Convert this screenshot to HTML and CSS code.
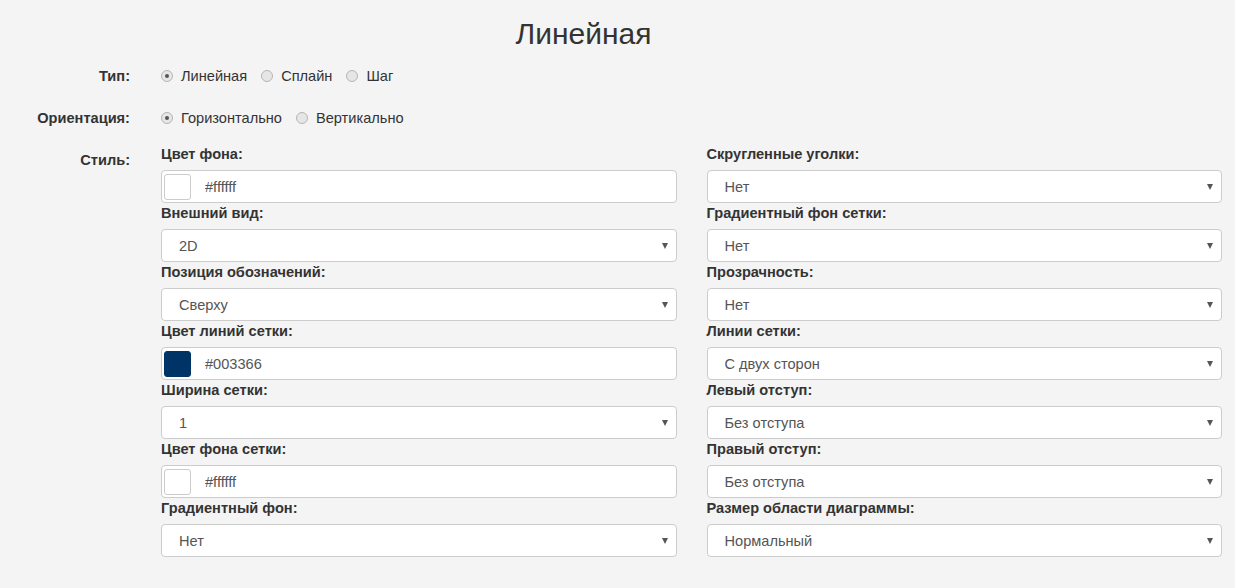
FILE: index.html
```html
<!DOCTYPE html>
<html lang="ru">
<head>
    <meta charset="UTF-8">
    <title>Линейная</title>
    <link rel="stylesheet" href="styles.css">
</head>
<body>
    <h1 class="title">Линейная</h1>

    <form class="settings">
        <div class="row">
            <label class="row-label">Тип:</label>
            <div class="radios">
                <label class="radio"><input type="radio" name="type" checked> Линейная</label>
                <label class="radio"><input type="radio" name="type"> Сплайн</label>
                <label class="radio"><input type="radio" name="type"> Шаг</label>
            </div>
        </div>

        <div class="row">
            <label class="row-label">Ориентация:</label>
            <div class="radios">
                <label class="radio"><input type="radio" name="orient" checked> Горизонтально</label>
                <label class="radio"><input type="radio" name="orient"> Вертикально</label>
            </div>
        </div>

        <div class="row">
            <label class="row-label">Стиль:</label>
            <div class="columns">
                <div class="column">
                    <div class="field">
                        <label>Цвет фона:</label>
                        <div class="color-input">
                            <span class="swatch"></span>
                            <input type="text" value="#ffffff">
                        </div>
                    </div>
                    <div class="field">
                        <label>Внешний вид:</label>
                        <div class="select"><select><option>2D</option><option>3D</option></select></div>
                    </div>
                    <div class="field">
                        <label>Позиция обозначений:</label>
                        <div class="select"><select><option>Сверху</option><option>Снизу</option></select></div>
                    </div>
                    <div class="field">
                        <label>Цвет линий сетки:</label>
                        <div class="color-input">
                            <span class="swatch swatch-blue"></span>
                            <input type="text" value="#003366">
                        </div>
                    </div>
                    <div class="field">
                        <label>Ширина сетки:</label>
                        <div class="select"><select><option>1</option><option>2</option></select></div>
                    </div>
                    <div class="field">
                        <label>Цвет фона сетки:</label>
                        <div class="color-input">
                            <span class="swatch"></span>
                            <input type="text" value="#ffffff">
                        </div>
                    </div>
                    <div class="field">
                        <label>Градиентный фон:</label>
                        <div class="select"><select><option>Нет</option><option>Да</option></select></div>
                    </div>
                </div>

                <div class="column">
                    <div class="field">
                        <label>Скругленные уголки:</label>
                        <div class="select"><select><option>Нет</option><option>Да</option></select></div>
                    </div>
                    <div class="field">
                        <label>Градиентный фон сетки:</label>
                        <div class="select"><select><option>Нет</option><option>Да</option></select></div>
                    </div>
                    <div class="field">
                        <label>Прозрачность:</label>
                        <div class="select"><select><option>Нет</option><option>Да</option></select></div>
                    </div>
                    <div class="field">
                        <label>Линии сетки:</label>
                        <div class="select"><select><option>С двух сторон</option></select></div>
                    </div>
                    <div class="field">
                        <label>Левый отступ:</label>
                        <div class="select"><select><option>Без отступа</option></select></div>
                    </div>
                    <div class="field">
                        <label>Правый отступ:</label>
                        <div class="select"><select><option>Без отступа</option></select></div>
                    </div>
                    <div class="field">
                        <label>Размер области диаграммы:</label>
                        <div class="select"><select><option>Нормальный</option></select></div>
                    </div>
                </div>
            </div>
        </div>
    </form>
</body>
</html>
```

FILE: styles.css
```css
* {
    margin: 0;
    padding: 0;
    box-sizing: border-box;
}

body {
    background: #f4f4f4;
    color: #333;
    font-family: 'Liberation Sans', Arial, sans-serif;
    font-size: 14.6px;
    line-height: 20px;
}

.title {
    margin: 16px 0 8px;
    font-size: 30px;
    line-height: 36px;
    font-weight: normal;
    text-align: center;
    padding-right: 68px;
}

.settings {
    padding-right: 13px;
}

.row {
    display: grid;
    grid-template-columns: 130px 1fr;
    column-gap: 31px;
    margin-bottom: 16px;
}

.row-label {
    text-align: right;
    font-weight: bold;
    padding-top: 6px;
}

.radios {
    display: flex;
    gap: 14px;
    padding-top: 6px;
}

.radio {
    display: flex;
    align-items: center;
    gap: 8px;
    cursor: pointer;
}

.radio input {
    appearance: none;
    width: 12px;
    height: 12px;
    border: 1px solid #b5b5b5;
    border-radius: 50%;
    background: #e6e6e6;
    display: grid;
    place-items: center;
}

.radio input:checked::after {
    content: "";
    width: 4px;
    height: 4px;
    border-radius: 50%;
    background: #555;
}

.columns {
    display: grid;
    grid-template-columns: 1fr 1fr;
    column-gap: 30px;
}

.field label {
    display: block;
    font-weight: bold;
    margin-bottom: 6px;
}

.color-input,
.select {
    position: relative;
    height: 33px;
    background: #fff;
    border: 1px solid #ccc;
    border-radius: 4px;
}

.color-input {
    display: flex;
    align-items: center;
    padding-left: 2px;
}

.swatch {
    width: 27px;
    height: 26px;
    border: 1px solid #ccc;
    border-radius: 3px;
    background: #fff;
}

.swatch-blue {
    background: #003366;
    border-color: #003366;
}

.color-input input,
.select select {
    border: none;
    background: transparent;
    font: inherit;
    color: #555;
    outline: none;
}

.color-input input {
    flex: 1;
    padding-left: 14px;
}

.select select {
    appearance: none;
    width: 100%;
    height: 100%;
    padding-left: 17px;
}

.select::after {
    content: "";
    position: absolute;
    right: 8px;
    top: 13px;
    border-left: 3px solid transparent;
    border-right: 3px solid transparent;
    border-top: 6px solid #555;
    pointer-events: none;
}
```
